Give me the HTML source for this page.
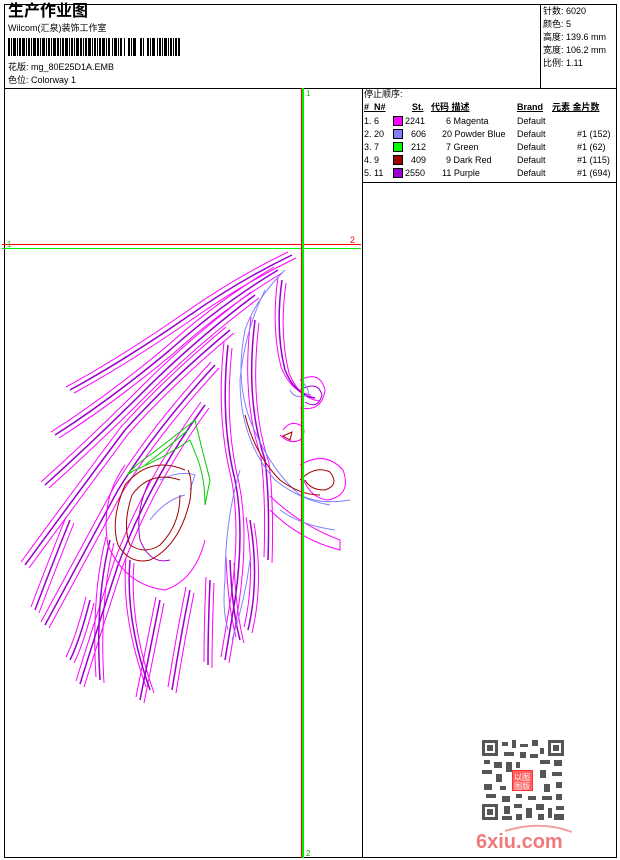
<!DOCTYPE html>
<html><head><meta charset="utf-8"><style>
body{margin:0;width:620px;height:860px;background:#fff;position:relative;overflow:hidden;font-family:"Liberation Sans","Noto Sans CJK SC",sans-serif;color:#000}
.t{position:absolute;font-size:9px;white-space:nowrap;line-height:11px}
</style></head><body>
<svg width="620" height="860" style="position:absolute;left:0;top:0">
<defs>
<g id="strands">
<path d="M292 255 Q240 280 190 315 Q125 360 70 390"/>
<path d="M278 270 Q220 305 170 350 Q110 400 55 435"/>
<path d="M255 295 Q195 340 145 390 Q95 440 45 485"/>
<path d="M230 330 Q170 380 125 430 Q80 490 25 565"/>
<path d="M215 365 Q155 430 118 490 Q80 560 45 625"/>
<path d="M205 405 Q150 480 118 565 Q100 620 80 684"/>
<path d="M228 345 Q220 420 235 480 Q245 530 235 600 Q230 630 225 660"/>
<path d="M255 320 Q245 400 265 460 Q270 500 268 560"/>
<path d="M282 280 Q275 330 285 370 Q295 395 315 398"/>
<path d="M130 560 Q125 620 150 690"/>
<path d="M190 590 Q180 640 172 690"/>
<path d="M210 580 Q208 630 208 665"/>
<path d="M110 540 Q95 600 100 680"/>
<path d="M160 600 Q150 650 140 700"/>
<path d="M230 560 Q232 610 240 640"/>
<path d="M250 520 Q260 580 248 630"/>
<path d="M70 520 Q50 570 35 610"/>
<path d="M90 600 Q80 640 70 660"/>
</g>
</defs>
<g fill="none" stroke="#000" stroke-width="1">
<rect x="4.5" y="4.5" width="612" height="853"/>
<line x1="4" y1="88.5" x2="617" y2="88.5"/>
<line x1="540.5" y1="4" x2="540.5" y2="88"/>
<line x1="362.5" y1="88" x2="362.5" y2="858"/>
<line x1="362" y1="182.5" x2="617" y2="182.5"/>
</g>
<g fill="#000">
<rect x="8" y="38" width="2" height="18"/><rect x="11" y="38" width="1" height="18"/><rect x="13" y="38" width="3" height="18"/><rect x="17" y="38" width="1" height="18"/><rect x="19" y="38" width="2" height="18"/><rect x="22" y="38" width="3" height="18"/><rect x="26" y="38" width="1" height="18"/><rect x="28" y="38" width="2" height="18"/><rect x="31" y="38" width="1" height="18"/><rect x="33" y="38" width="3" height="18"/><rect x="37" y="38" width="2" height="18"/><rect x="40" y="38" width="1" height="18"/><rect x="42" y="38" width="3" height="18"/><rect x="46" y="38" width="1" height="18"/><rect x="48" y="38" width="2" height="18"/><rect x="51" y="38" width="1" height="18"/><rect x="53" y="38" width="3" height="18"/><rect x="57" y="38" width="2" height="18"/><rect x="60" y="38" width="1" height="18"/><rect x="62" y="38" width="2" height="18"/><rect x="65" y="38" width="3" height="18"/><rect x="69" y="38" width="1" height="18"/><rect x="71" y="38" width="2" height="18"/><rect x="74" y="38" width="1" height="18"/><rect x="76" y="38" width="3" height="18"/><rect x="80" y="38" width="2" height="18"/><rect x="83" y="38" width="1" height="18"/><rect x="85" y="38" width="2" height="18"/><rect x="88" y="38" width="3" height="18"/><rect x="92" y="38" width="1" height="18"/><rect x="94" y="38" width="2" height="18"/><rect x="97" y="38" width="1" height="18"/><rect x="99" y="38" width="2" height="18"/><rect x="102" y="38" width="3" height="18"/><rect x="106" y="38" width="1" height="18"/><rect x="108" y="38" width="2" height="18"/><rect x="112" y="38" width="1" height="18"/><rect x="114" y="38" width="3" height="18"/><rect x="118" y="38" width="1" height="18"/><rect x="120" y="38" width="2" height="18"/><rect x="124" y="38" width="1" height="18"/><rect x="128" y="38" width="2" height="18"/><rect x="131" y="38" width="1" height="18"/><rect x="133" y="38" width="3" height="18"/><rect x="140" y="38" width="2" height="18"/><rect x="143" y="38" width="1" height="18"/><rect x="147" y="38" width="2" height="18"/><rect x="150" y="38" width="1" height="18"/><rect x="152" y="38" width="3" height="18"/><rect x="157" y="38" width="1" height="18"/><rect x="159" y="38" width="2" height="18"/><rect x="162" y="38" width="1" height="18"/><rect x="164" y="38" width="3" height="18"/><rect x="168" y="38" width="1" height="18"/><rect x="170" y="38" width="2" height="18"/><rect x="173" y="38" width="1" height="18"/><rect x="175" y="38" width="2" height="18"/><rect x="178" y="38" width="2" height="18"/>
</g>
<rect x="393.5" y="116.5" width="9" height="9" fill="#ff00ff" stroke="#000"/>
<rect x="393.5" y="129.5" width="9" height="9" fill="#8080ff" stroke="#000"/>
<rect x="393.5" y="142.5" width="9" height="9" fill="#00ff00" stroke="#000"/>
<rect x="393.5" y="155.5" width="9" height="9" fill="#a00000" stroke="#000"/>
<rect x="393.5" y="168.5" width="9" height="9" fill="#9900cc" stroke="#000"/>
<g fill="none" stroke-width="1">
<use href="#strands" stroke="#ff00ff" transform="translate(-4,-3)"/>
<use href="#strands" stroke="#ff00ff" transform="translate(4,3)"/>
<use href="#strands" stroke="#9900cc" stroke-width="1.5"/>
<g stroke="#ff00ff">
<path d="M300 380 Q320 370 325 390 Q322 412 300 408"/>
<path d="M280 435 Q290 445 300 440 Q308 430 300 425 Q290 420 283 430"/>
<path d="M300 465 Q325 450 343 470 Q352 495 328 500 Q310 498 303 478"/>
<path d="M270 496 Q300 525 340 540 L340 550 Q300 540 270 510"/>
<path d="M125 465 Q100 500 108 545 Q125 585 165 590 Q195 580 205 540"/>
</g>
<g stroke="#9900cc">
<path d="M300 390 Q318 380 322 395 Q318 410 305 402"/>
<path d="M150 480 Q135 510 140 540 Q150 565 170 560"/>
</g>
<g stroke="#8080ff">
<path d="M285 270 Q255 300 245 330 Q235 380 250 420 Q270 470 300 495 Q320 505 350 500"/>
<path d="M265 290 Q245 330 240 380 Q240 440 275 480 Q300 500 330 505"/>
<path d="M300 380 Q310 388 308 395 Q295 400 290 390"/>
<path d="M240 470 Q225 520 225 580 Q222 610 228 630"/>
<path d="M160 480 Q180 470 195 475 L190 490"/>
<path d="M150 520 Q165 500 185 495"/>
<path d="M280 510 Q300 525 335 530"/>
<path d="M250 560 Q245 600 232 640"/>
</g>
<g stroke="#00cc00">
<path d="M195 420 Q170 440 150 455 Q135 465 127 475 L135 470 Q160 460 190 440 L198 460 Q205 480 205 505 L210 480 Q202 450 195 420"/>
<path d="M188 430 Q165 450 145 465"/>
</g>
<g stroke="#a00000">
<path d="M185 470 Q150 455 125 485 Q110 520 118 545 Q130 565 150 560 Q180 545 190 500 Q193 480 188 470"/>
<path d="M180 480 Q150 470 132 495 Q122 525 130 545 Q145 555 160 545 Q180 525 180 495"/>
<path d="M245 415 Q255 455 280 480 Q300 495 320 495"/>
<path d="M300 480 Q315 465 330 472 Q340 485 325 490 Q310 490 305 480"/>
<path d="M283 436 L292 432 L290 440 Z"/>
</g>
</g>
<line x1="2" y1="244.5" x2="361" y2="244.5" stroke="#ff0000"/>
<line x1="2" y1="248.5" x2="361" y2="248.5" stroke="#00ee00"/>
<line x1="301.5" y1="88" x2="301.5" y2="858" stroke="#ff0000"/>
<line x1="302.5" y1="88" x2="302.5" y2="858" stroke="#00ee00"/>
<line x1="303.5" y1="88" x2="303.5" y2="858" stroke="#00ee00"/>
<g fill="#555">
<rect x="482" y="740" width="82" height="80" fill="#fff"/>
<rect x="482" y="740" width="16" height="16"/><rect x="485" y="743" width="10" height="10" fill="#fff"/><rect x="487" y="745" width="6" height="6"/>
<rect x="548" y="740" width="16" height="16"/><rect x="551" y="743" width="10" height="10" fill="#fff"/><rect x="553" y="745" width="6" height="6"/>
<rect x="482" y="804" width="16" height="16"/><rect x="485" y="807" width="10" height="10" fill="#fff"/><rect x="487" y="809" width="6" height="6"/>
<rect x="502" y="742" width="6" height="4"/><rect x="512" y="740" width="4" height="8"/><rect x="520" y="744" width="8" height="3"/><rect x="532" y="740" width="6" height="6"/><rect x="540" y="748" width="4" height="6"/>
<rect x="504" y="752" width="10" height="4"/><rect x="520" y="752" width="6" height="6"/><rect x="530" y="754" width="8" height="4"/>
<rect x="484" y="760" width="6" height="4"/><rect x="494" y="762" width="8" height="6"/><rect x="506" y="762" width="6" height="10"/><rect x="516" y="762" width="4" height="6"/><rect x="540" y="760" width="10" height="4"/><rect x="554" y="760" width="8" height="6"/>
<rect x="482" y="770" width="10" height="4"/><rect x="496" y="774" width="6" height="8"/><rect x="540" y="770" width="6" height="8"/><rect x="552" y="772" width="10" height="4"/>
<rect x="484" y="784" width="8" height="6"/><rect x="500" y="786" width="6" height="4"/><rect x="544" y="784" width="6" height="8"/><rect x="556" y="782" width="6" height="6"/>
<rect x="486" y="794" width="10" height="4"/><rect x="502" y="796" width="8" height="6"/><rect x="516" y="794" width="6" height="4"/><rect x="528" y="796" width="8" height="4"/><rect x="542" y="796" width="10" height="4"/><rect x="556" y="794" width="6" height="6"/>
<rect x="504" y="806" width="6" height="8"/><rect x="514" y="804" width="8" height="4"/><rect x="526" y="808" width="6" height="10"/><rect x="536" y="804" width="8" height="6"/><rect x="548" y="808" width="4" height="10"/><rect x="556" y="806" width="8" height="4"/>
<rect x="502" y="816" width="10" height="4"/><rect x="516" y="814" width="6" height="6"/><rect x="538" y="814" width="6" height="6"/><rect x="554" y="814" width="10" height="6"/>
</g>
<rect x="512.5" y="770.5" width="20" height="20" fill="#ff6060" stroke="#ff3030"/>
<text x="514" y="780" font-size="8" fill="#fff" font-family="Noto Sans CJK SC">以图</text>
<text x="514" y="789" font-size="8" fill="#fff" font-family="Noto Sans CJK SC">图版</text>
<path d="M505 831 Q540 820 572 832" stroke="#f0a0a0" stroke-width="2" fill="none"/>
<text x="476" y="848" font-size="20" font-weight="bold" fill="#f07a7a" font-family="Liberation Sans">6xiu.com</text>
<text x="7" y="247" font-size="8" fill="#00cc00">1</text>
<text x="350" y="243" font-size="9" fill="#ff0000">2</text>
<text x="306" y="96" font-size="8" fill="#00cc00">1</text>
<text x="306" y="856" font-size="8" fill="#00aa00">2</text>
</svg>
<div class="t" style="left:8px;top:3px;font-size:16px;font-weight:bold;line-height:18px">生产作业图</div>
<div class="t" style="left:8px;top:23px">Wilcom(汇泉)装饰工作室</div>
<div class="t" style="left:8px;top:62px">花版: mg_80E25D1A.EMB</div>
<div class="t" style="left:8px;top:75px">色位: Colorway 1</div>
<div class="t" style="left:543px;top:6px">针数: 6020</div>
<div class="t" style="left:543px;top:19px">颜色: 5</div>
<div class="t" style="left:543px;top:32px">高度: 139.6 mm</div>
<div class="t" style="left:543px;top:45px">宽度: 106.2 mm</div>
<div class="t" style="left:543px;top:58px">比例: 1.11</div>
<div class="t" style="left:364px;top:89px">停止顺序:</div>
<div class="t" style="left:364px;top:102px;font-weight:bold;text-decoration:underline">#&nbsp; N#</div>
<div class="t" style="left:412px;top:102px;font-weight:bold;text-decoration:underline">St.</div>
<div class="t" style="left:431px;top:102px;font-weight:bold;text-decoration:underline">代码 描述</div>
<div class="t" style="left:517px;top:102px;font-weight:bold;text-decoration:underline">Brand</div>
<div class="t" style="left:552px;top:102px;font-weight:bold;text-decoration:underline">元素 金片数</div>
<div class="t" style="left:364px;top:116px">1. 6</div><div class="t" style="left:405px;top:116px">2241</div><div class="t" style="left:446px;top:116px">6 Magenta</div><div class="t" style="left:517px;top:116px">Default</div>
<div class="t" style="left:364px;top:129px">2. 20</div><div class="t" style="left:411px;top:129px">606</div><div class="t" style="left:442px;top:129px">20 Powder Blue</div><div class="t" style="left:517px;top:129px">Default</div><div class="t" style="left:577px;top:129px">#1 (152)</div>
<div class="t" style="left:364px;top:142px">3. 7</div><div class="t" style="left:411px;top:142px">212</div><div class="t" style="left:446px;top:142px">7 Green</div><div class="t" style="left:517px;top:142px">Default</div><div class="t" style="left:577px;top:142px">#1 (62)</div>
<div class="t" style="left:364px;top:155px">4. 9</div><div class="t" style="left:411px;top:155px">409</div><div class="t" style="left:446px;top:155px">9 Dark Red</div><div class="t" style="left:517px;top:155px">Default</div><div class="t" style="left:577px;top:155px">#1 (115)</div>
<div class="t" style="left:364px;top:168px">5. 11</div><div class="t" style="left:405px;top:168px">2550</div><div class="t" style="left:442px;top:168px">11 Purple</div><div class="t" style="left:517px;top:168px">Default</div><div class="t" style="left:577px;top:168px">#1 (694)</div>
</body></html>
